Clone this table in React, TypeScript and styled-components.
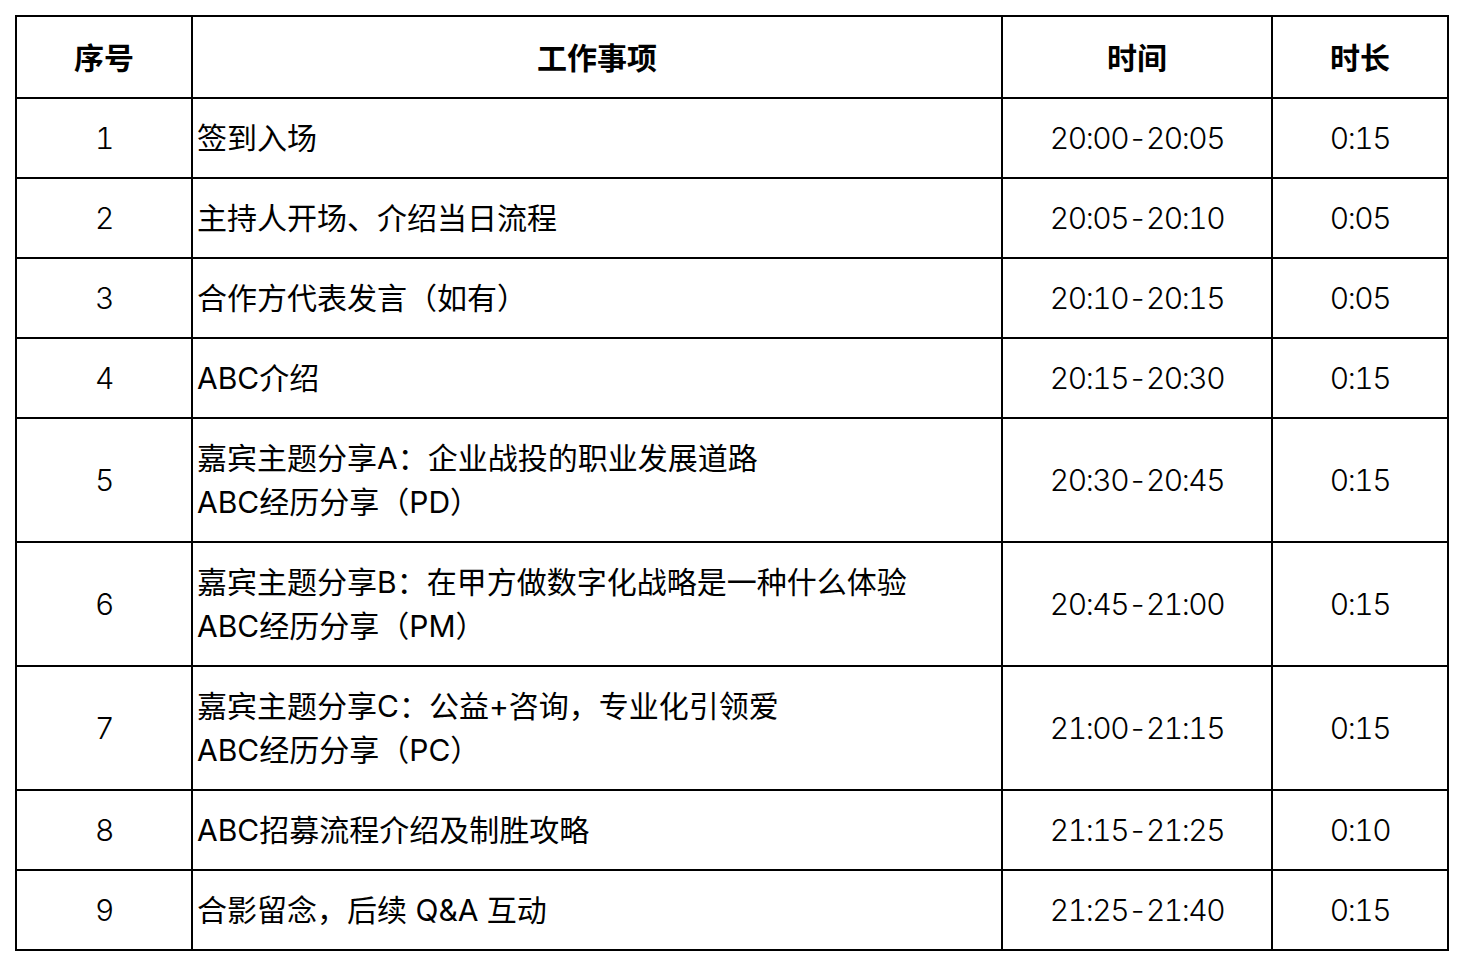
import styled, { createGlobalStyle } from 'styled-components';

interface AgendaItem {
  no: number;
  lines: string[];
  time: string;
  duration: string;
}

const agenda: AgendaItem[] = [
  { no: 1, lines: ['签到入场'], time: '20:00-20:05', duration: '0:15' },
  { no: 2, lines: ['主持人开场、介绍当日流程'], time: '20:05-20:10', duration: '0:05' },
  { no: 3, lines: ['合作方代表发言（如有）'], time: '20:10-20:15', duration: '0:05' },
  { no: 4, lines: ['ABC介绍'], time: '20:15-20:30', duration: '0:15' },
  {
    no: 5,
    lines: ['嘉宾主题分享A：企业战投的职业发展道路', 'ABC经历分享（PD）'],
    time: '20:30-20:45',
    duration: '0:15',
  },
  {
    no: 6,
    lines: ['嘉宾主题分享B：在甲方做数字化战略是一种什么体验', 'ABC经历分享（PM）'],
    time: '20:45-21:00',
    duration: '0:15',
  },
  {
    no: 7,
    lines: ['嘉宾主题分享C：公益+咨询，专业化引领爱', 'ABC经历分享（PC）'],
    time: '21:00-21:15',
    duration: '0:15',
  },
  { no: 8, lines: ['ABC招募流程介绍及制胜攻略'], time: '21:15-21:25', duration: '0:10' },
  { no: 9, lines: ['合影留念，后续 Q&A 互动'], time: '21:25-21:40', duration: '0:15' },
];

const GlobalStyle = createGlobalStyle`
  html, body {
    margin: 0;
    padding: 0;
    background: #ffffff;
  }
  body {
    font-family: Inter, "Noto Sans CJK SC", "Noto Sans", sans-serif;
    color: #000000;
  }
`;

const Page = styled.div`
  padding: 15px 0 0 15px;
`;

const Table = styled.table`
  border-collapse: collapse;
  table-layout: fixed;
  width: 1434px;
  border: 2px solid #000;
`;

const HeadCell = styled.th`
  border: 2px solid #000;
  height: 77px;
  padding: 0 0 3px;
  font-family: "Noto Sans CJK SC", sans-serif;
  font-size: 30px;
  font-weight: 700;
  text-align: center;
  vertical-align: middle;
`;

const Cell = styled.td<{ $tall?: boolean }>`
  border: 2px solid #000;
  height: ${(p) => (p.$tall ? 122 : 78)}px;
  padding: 0;
  font-size: 30px;
  font-weight: 300;
  line-height: 44px;
  font-variant-numeric: tabular-nums;
  letter-spacing: -1.5px;
  text-align: center;
  vertical-align: middle;
  white-space: nowrap;
`;

const ItemCell = styled(Cell)`
  padding-left: 4px;
  font-weight: 400;
  font-variant-numeric: normal;
  letter-spacing: 0;
  text-align: left;
`;

const Line = styled.div`
  line-height: 44px;
`;

const App = () => {
  return (
    <>
      <GlobalStyle />
      <Page>
        <Table>
          <colgroup>
            <col style={{ width: 176 }} />
            <col style={{ width: 810 }} />
            <col style={{ width: 270 }} />
            <col style={{ width: 176 }} />
          </colgroup>
          <thead>
            <tr>
              <HeadCell>序号</HeadCell>
              <HeadCell>工作事项</HeadCell>
              <HeadCell>时间</HeadCell>
              <HeadCell>时长</HeadCell>
            </tr>
          </thead>
          <tbody>
            {agenda.map((item) => {
              const tall = item.lines.length > 1;
              return (
                <tr key={item.no}>
                  <Cell $tall={tall}>{item.no}</Cell>
                  <ItemCell $tall={tall}>
                    {item.lines.map((line) => (
                      <Line key={line}>{line}</Line>
                    ))}
                  </ItemCell>
                  <Cell $tall={tall}>{item.time}</Cell>
                  <Cell $tall={tall}>{item.duration}</Cell>
                </tr>
              );
            })}
          </tbody>
        </Table>
      </Page>
    </>
  );
};

export default App;
